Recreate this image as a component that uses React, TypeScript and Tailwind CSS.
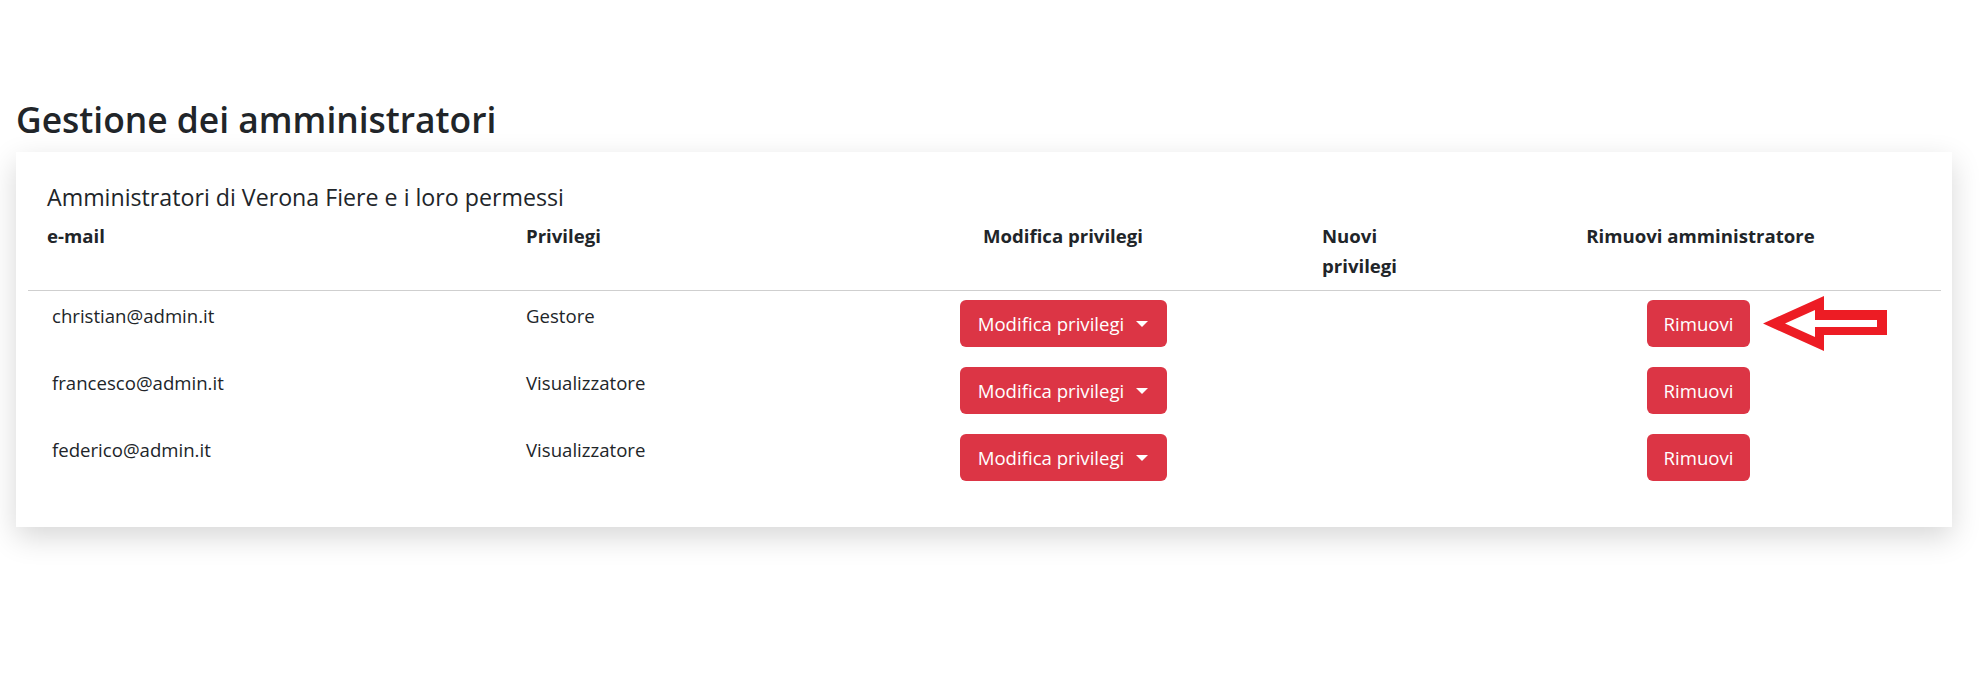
import React from "react";

type Admin = { email: string; role: string };

const admins: Admin[] = [
  { email: "christian@admin.it", role: "Gestore" },
  { email: "francesco@admin.it", role: "Visualizzatore" },
  { email: "federico@admin.it", role: "Visualizzatore" },
];

function Arrow() {
  return (
    <svg
      width="124"
      height="55"
      viewBox="0 0 124 55"
      className="absolute left-[116px] top-[-4px]"
    >
      <polygon points="0,27.5 61,0 61,14 124,14 124,39 61,39 61,55" fill="#ed1c24" />
      <polygon points="22,27.5 52,14 52,24 114,24 114,31 52,31 52,41" fill="#ffffff" />
    </svg>
  );
}

export default function App() {
  return (
    <div
      className="min-h-screen bg-white text-[#212529]"
      style={{ fontFamily: '"Open Sans", "Noto Sans", sans-serif' }}
    >
      <div className="pt-[99px]">
        <h2 className="pl-[16px] text-[35.4px] leading-[40px] font-semibold">Gestione dei amministratori</h2>

        <div className="mt-[13px] ml-[16px] mr-[34px] bg-white pt-[32px] pb-[35px] pl-[12px] pr-[11px] shadow-[0_10px_28px_rgba(0,0,0,0.16)]">
          <h5 className="pl-[19px] text-[23.2px] leading-[27px]">
            Amministratori di Verona Fiere e i loro permessi
          </h5>

          {/* header */}
          <div className="grid grid-cols-[488px_298px_498px_148px_481px] h-[80px] border-b border-[#cfcfcf] text-[18.6px] leading-[30px] font-bold">
            <div className="pt-[10px] pl-[19px]">e-mail</div>
            <div className="pt-[10px] pl-[10px]">Privilegi</div>
            <div className="pt-[10px] text-center">Modifica privilegi</div>
            <div className="pt-[10px] px-[10px]">Nuovi privilegi</div>
            <div className="pt-[10px] text-center">Rimuovi amministratore</div>
          </div>

          {admins.map((a, i) => (
            <div
              key={a.email}
              className="grid grid-cols-[488px_298px_498px_148px_481px] h-[67px] text-[18.6px] leading-[30px]"
            >
              <div className="pt-[10px] pl-[24px]">{a.email}</div>
              <div className="pt-[10px] pl-[10px]">{a.role}</div>
              <div className="pt-[9px] flex justify-center">
                <button className="w-[207px] h-[47px] rounded-[6px] bg-[#dc3545] text-white flex items-center justify-center gap-[12px]">
                  <span>Modifica privilegi</span>
                  <span className="w-0 h-0 border-t-[6px] border-t-white border-x-[6px] border-x-transparent" />
                </button>
              </div>
              <div />
              <div className="pt-[9px] flex justify-center pr-[4px]">
                <div className="relative">
                  <button className="w-[103px] h-[47px] rounded-[6px] bg-[#dc3545] text-white">Rimuovi</button>
                  {i === 0 && <Arrow />}
                </div>
              </div>
            </div>
          ))}
        </div>
      </div>
    </div>
  );
}
